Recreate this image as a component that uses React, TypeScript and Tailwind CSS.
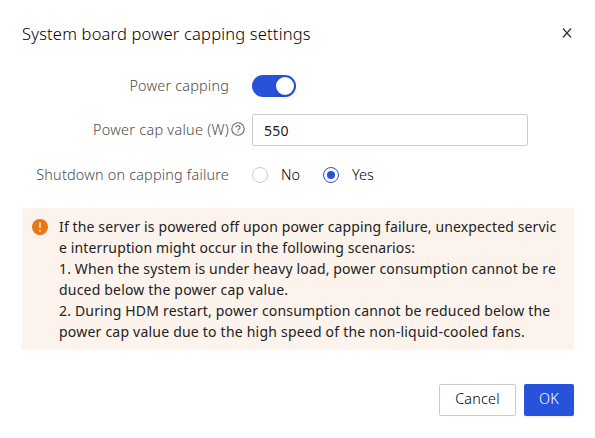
import type { ReactNode } from "react";

const notice = [
  { text: "If the server is powered off upon power capping failure, unexpected servic", className: "tracking-[0.13px]" },
  { text: "e interruption might occur in the following scenarios:", className: "tracking-[0.13px]" },
  { text: "1. When the system is under heavy load, power consumption cannot be re", className: "tracking-[0.155px]" },
  { text: "duced below the power cap value.", className: "tracking-[0.19px]" },
  { text: "2. During HDM restart, power consumption cannot be reduced below the", className: "tracking-[0.175px]" },
  { text: "power cap value due to the high speed of the non-liquid-cooled fans.", className: "tracking-[0.215px]" },
];

function Row({ label, children, className }: { label: ReactNode; children: ReactNode; className: string }) {
  return (
    <div className={`flex h-8 items-center ${className}`}>
      <div className="flex w-[230px] shrink-0 items-center justify-end pb-[2px] tracking-[0.2px] text-[#4d4d4d]">{label}</div>
      {children}
    </div>
  );
}

function Radio({ label, checked = false }: { label: string; checked?: boolean }) {
  return (
    <label className="flex w-[71px] items-center gap-[13px]">
      <span
        className={`flex size-4 items-center justify-center rounded-full border bg-white ${checked ? "border-[#2653d9]" : "border-[#cccccc]"}`}
      >
        {checked && <span className="size-2 rounded-full bg-[#2653d9]" />}
      </span>
      <span className="pb-[2px]">{label}</span>
    </label>
  );
}

function HelpIcon() {
  return (
    <svg className="ml-[2px] size-[14px]" viewBox="0 0 14 14" fill="none" stroke="#666" strokeWidth="1.1">
      <circle cx="7" cy="7" r="6.2" />
      <path d="M5 5.6a2 1.9 0 1 1 2.8 1.7c-.6.3-.8.6-.8 1.3" />
      <path d="M7 9.6v1.1" />
    </svg>
  );
}

export default function App() {
  return (
    <main className="h-[438px] w-[595px] bg-white px-[22px] pt-[22px] font-['Noto_Sans',sans-serif] text-[14.4px] leading-[21px] font-light text-black">
      <header className="flex h-6 items-center justify-between">
        <h1 className="whitespace-nowrap text-[16.5px] leading-6 font-light tracking-[0.19px]">System board power capping settings</h1>
        <button aria-label="Close" className="mr-[1px] -mt-[2px]">
          <svg className="size-[10px]" viewBox="0 0 10 10" stroke="#333" strokeWidth="1.2">
            <path d="M1 .5l8 9M9 .5l-8 9" />
          </svg>
        </button>
      </header>

      <Row className="mt-6" label={<span className="mr-[23px]">Power capping</span>}>
        <button role="switch" aria-checked="true" aria-label="Power capping" className="flex h-[22px] w-11 items-center justify-end rounded-full bg-[#2653d9] p-[2px]">
          <span className="size-[18px] rounded-full bg-white shadow-[0_2px_4px_rgba(0,35,11,0.2)]" />
        </button>
      </Row>
      <Row
        className="mt-3"
        label={
          <span className="mr-[7px] flex items-center tracking-[0.29px]">
            Power cap value (W)
            <HelpIcon />
          </span>
        }
      >
        <input readOnly value="550" className="h-8 w-[276px] rounded-[2px] border border-[#cccccc] px-[11px] text-[14px] font-normal tracking-[0.2px] text-[#222]" />
      </Row>
      <Row className="mt-[13px]" label={<span className="mr-[23px]">Shutdown on capping failure</span>}>
        <div className="flex">
          <Radio label="No" />
          <Radio label="Yes" checked />
        </div>
      </Row>

      <section className="mt-[17px] flex h-[142px] w-[552px] bg-[#fcf3ec] pl-[10px] pt-2 text-[14px] font-normal text-[#222]">
        <svg className="mt-[3px] size-4 shrink-0" viewBox="0 0 16 16">
          <circle cx="8" cy="8" r="8" fill="#e87516" />
          <path d="M8 3.2v6M8 11v1.8" stroke="#fbe0cb" strokeWidth="1.6" />
        </svg>
        <div className="ml-[11px]">
          {notice.map((line) => (
            <p key={line.text} className="whitespace-nowrap">
              <span className={line.className}>{line.text}</span>
            </p>
          ))}
        </div>
      </section>

      <footer className="mt-[34px] flex w-[552px] justify-end gap-2">
        <button className="h-8 w-[77px] rounded-[2px] border border-[#cccccc] pb-[3px] tracking-[0.2px]">Cancel</button>
        <button className="h-8 w-[50px] rounded-[2px] bg-[#2653d9] pb-[3px] tracking-[0.2px] text-white shadow-[0_2px_0_rgba(0,0,0,0.045)]">OK</button>
      </footer>
    </main>
  );
}
